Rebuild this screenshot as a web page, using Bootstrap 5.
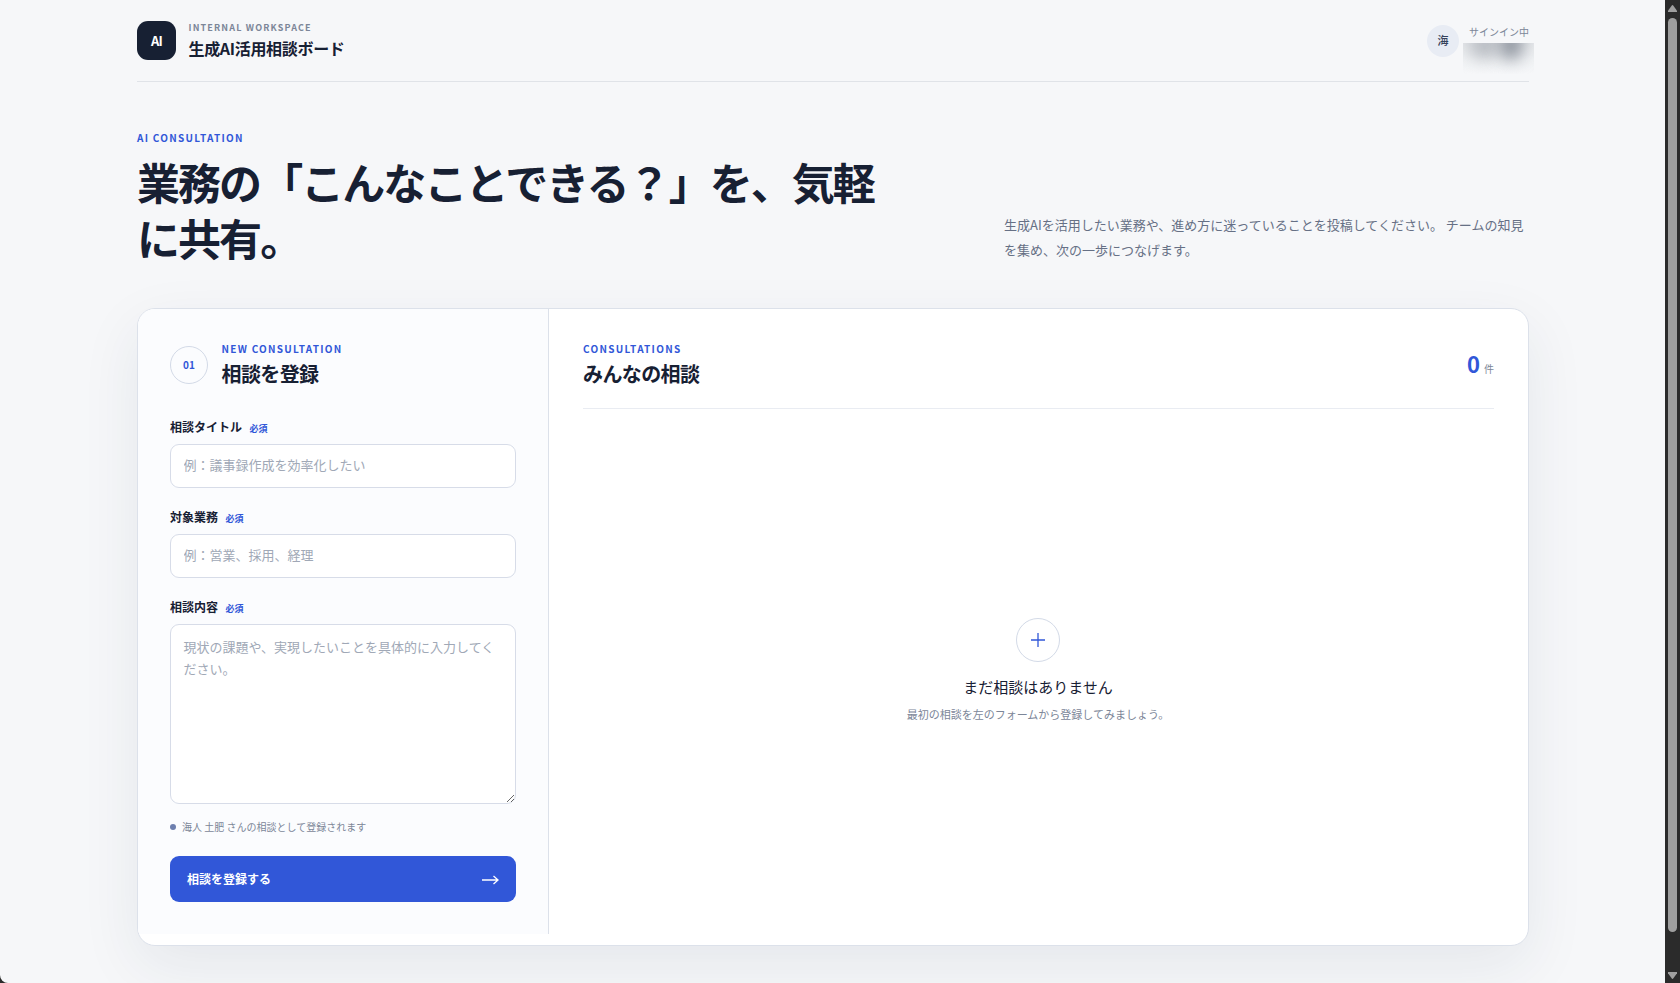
<!DOCTYPE html>
<html lang="ja">
<head>
<meta charset="utf-8">
<meta name="viewport" content="width=device-width, initial-scale=1">
<title>生成AI活用相談ボード</title>
<link rel="stylesheet" href="https://cdn.jsdelivr.net/npm/bootstrap@5.3.0/dist/css/bootstrap.min.css">
<style>
:root{--ink:#172033;--blue:#3157d8;--muted:#7c8698;--line:#dce1ea}
body{font-family:"Noto Sans CJK JP",sans-serif;background:#2b2b2b;color:var(--ink);height:983px;overflow:hidden;font-size:16px;line-height:1.5}
h1,h2,p{margin:0}
.page-view{background:#f6f7f9;border-bottom-left-radius:8px;min-width:0;overflow:hidden}
.shell{width:1392px;margin-left:137px}
.topbar{height:82px;border-bottom:1px solid #e0e3e8}
.logo-box{width:39px;height:39px;border-radius:11px;background:var(--ink);color:#fff;font-size:13px;font-weight:700;letter-spacing:-.8px}
.brand-text{margin-left:12.5px}
.brand-sub{font-size:9px;line-height:14px;font-weight:700;letter-spacing:1.17px;color:var(--muted);margin-top:-1px;margin-bottom:1px}
.brand-name{font-size:16px;line-height:24px;font-weight:700;letter-spacing:-.32px}
.avatar-dot{width:32px;height:32px;margin-right:9px;background:#e8ecf4;color:#34415a;font-size:11px;font-weight:500}
.user-col{width:61px;height:40px;position:relative}
.user-state{font-size:10px;line-height:15px;padding-top:3px;color:var(--muted);white-space:nowrap}
.name-mask{position:absolute;left:-5px;top:22px;width:71px;height:31px;overflow:hidden;background:linear-gradient(#e6e8eb,#f0f2f4 55%,#f6f7f9)}
.name-mask i{position:absolute;border-radius:50%;filter:blur(8px)}
.name-mask .m1{left:6px;top:-12px;width:30px;height:28px;background:#b9bdc3}
.name-mask .m2{left:36px;top:-14px;width:24px;height:31px;background:#8f959f}
.eyebrow{font-size:10px;line-height:15px;font-weight:700;letter-spacing:1.27px;color:var(--blue)}
.intro{height:226px;padding-top:48px}
.headline{font-size:43px;line-height:56px;font-weight:700;letter-spacing:-1.94px;width:760px;margin-top:8px}
.lead-copy{width:525px;font-size:13px;line-height:25px;color:#667085;padding-bottom:46.5px}
.board{height:638px;background:#fff;border:1px solid var(--line);border-radius:18px;box-shadow:0 20px 60px rgba(31,55,75,.08);overflow:hidden}
.form-pane{width:411px;height:625px;background:#fbfcfe;border-right:1px solid var(--line);padding:32px 32px 0}
.list-pane{padding:32px 34px 0}
.form-head{margin-bottom:28px}
.step-no{width:38px;height:38px;margin-right:13.5px;padding-bottom:1px;border:1px solid #d3dae7;color:var(--blue);font-size:10px;font-weight:700}
.section-title{font-size:20px;line-height:30px;font-weight:700;letter-spacing:-.6px;margin-top:3px}
.form-label{font-size:12px;line-height:18px;height:20px;font-weight:700;margin:0 0 7px;display:flex;align-items:center;gap:7.5px}
.form-label span{font-size:9px;font-weight:700;color:var(--blue);padding-top:3px}
.field-block+.field-block{margin-top:19px}
.form-control,.form-control:focus{border:1px solid #d7dce8;border-radius:9px;background:#fff;font-size:13px;line-height:22.1px;padding:0 12.5px 3px;height:44px;box-shadow:none}
.form-control::placeholder{color:#a0a8b6;opacity:1}
textarea.form-control{height:180px;padding-top:11.4px;resize:vertical}
.note-line{font-size:10px;line-height:15px;color:var(--muted);gap:6px;margin:15px 0 22px}
.note-dot{width:6px;height:6px;background:#6d7fae}
.send-btn,.send-btn:hover{height:46px;background:var(--blue);color:#fff;border:0;border-radius:9px;font-size:12px;font-weight:700;padding:0 17px}
.send-btn svg{margin-top:2px}
.list-head{height:68px;border-bottom:1px solid #e9ecf2}
.count-box{padding-top:6px}
.count-no{font-size:22px;line-height:32px;font-weight:700;color:var(--blue)}
.count-unit{font-size:10px;color:var(--muted)}
.empty-state{padding-top:209px;padding-right:1px}
.empty-ring{width:44px;height:44px;border:1px solid #d3dae7}
.empty-title{font-size:15px;line-height:22px;margin-top:14px}
.empty-copy{font-size:11px;line-height:17px;color:var(--muted);margin-top:8px}
.scroll-rail{width:15px;background:#2b2b2b;padding:5px 0 4px}
.scroll-thumb{width:9px;height:914px;background:#9f9f9f;border-radius:5px;margin-top:6px}
</style>
</head>
<body class="d-flex">
<div class="page-view flex-grow-1">
 <div class="shell">
  <header class="topbar d-flex justify-content-between align-items-center">
   <div class="d-flex align-items-center">
    <div class="logo-box d-flex align-items-center justify-content-center">AI</div>
    <div class="brand-text"><div class="brand-sub">INTERNAL WORKSPACE</div><div class="brand-name">生成AI活用相談ボード</div></div>
   </div>
   <div class="d-flex align-items-center">
    <div class="avatar-dot rounded-circle d-flex align-items-center justify-content-center">海</div>
    <div class="user-col"><div class="user-state text-end">サインイン中</div><div class="name-mask"><i class="m1"></i><i class="m2"></i></div></div>
   </div>
  </header>
  <section class="intro d-flex justify-content-between">
   <div><div class="eyebrow">AI CONSULTATION</div><h1 class="headline">業務の「こんなことできる？」を、気軽に共有。</h1></div>
   <p class="lead-copy align-self-end">生成AIを活用したい業務や、進め方に迷っていることを投稿してください。 チームの知見を集め、次の一歩につなげます。</p>
  </section>
  <main class="board d-flex align-items-start">
   <form class="form-pane flex-shrink-0">
    <div class="form-head d-flex align-items-center">
     <div class="step-no rounded-circle d-flex align-items-center justify-content-center">01</div>
     <div><div class="eyebrow">NEW CONSULTATION</div><h2 class="section-title">相談を登録</h2></div>
    </div>
    <div class="field-block"><label class="form-label" for="t">相談タイトル<span>必須</span></label><input id="t" class="form-control" placeholder="例：議事録作成を効率化したい"></div>
    <div class="field-block"><label class="form-label" for="b">対象業務<span>必須</span></label><input id="b" class="form-control" placeholder="例：営業、採用、経理"></div>
    <div class="field-block"><label class="form-label" for="c">相談内容<span>必須</span></label><textarea id="c" class="form-control" placeholder="現状の課題や、実現したいことを具体的に入力してください。"></textarea></div>
    <div class="note-line d-flex align-items-center"><span class="note-dot rounded-circle"></span>海人 土肥 さんの相談として登録されます</div>
    <button type="button" class="btn send-btn w-100 d-flex align-items-center justify-content-between">相談を登録する
     <svg width="17" height="10" viewBox="0 0 17 10" fill="none" stroke="#fff" stroke-width="1.3"><path d="M0 5H16M11.5 1L16 5L11.5 9"/></svg>
    </button>
   </form>
   <section class="list-pane flex-grow-1 h-100 d-flex flex-column">
    <div class="list-head d-flex justify-content-between">
     <div><div class="eyebrow">CONSULTATIONS</div><h2 class="section-title">みんなの相談</h2></div>
     <div class="count-box d-flex align-items-baseline gap-1"><span class="count-no">0</span><span class="count-unit">件</span></div>
    </div>
    <div class="empty-state d-flex flex-column align-items-center">
     <div class="empty-ring rounded-circle d-flex align-items-center justify-content-center"><svg width="14" height="14" viewBox="0 0 14 14" stroke="#3157d8" stroke-width="1.3"><path d="M7 0V14M0 7H14"/></svg></div>
     <div class="empty-title">まだ相談はありません</div>
     <div class="empty-copy">最初の相談を左のフォームから登録してみましょう。</div>
    </div>
   </section>
  </main>
 </div>
</div>
<div class="scroll-rail d-flex flex-column align-items-center flex-shrink-0">
 <svg width="9" height="7" viewBox="0 0 9 7" fill="#9f9f9f"><path d="M3.6 .7Q4.5-.5 5.4.7L9 5.8V7H0V5.8Z"/></svg>
 <div class="scroll-thumb"></div>
 <svg class="mt-auto" width="9" height="7" viewBox="0 0 9 7" fill="#9f9f9f"><path d="M3.6 6.3Q4.5 7.5 5.4 6.3L9 1.2V0H0V1.2Z"/></svg>
</div>
<script src="https://cdn.jsdelivr.net/npm/bootstrap@5.3.0/dist/js/bootstrap.bundle.min.js"></script>
</body>
</html>
